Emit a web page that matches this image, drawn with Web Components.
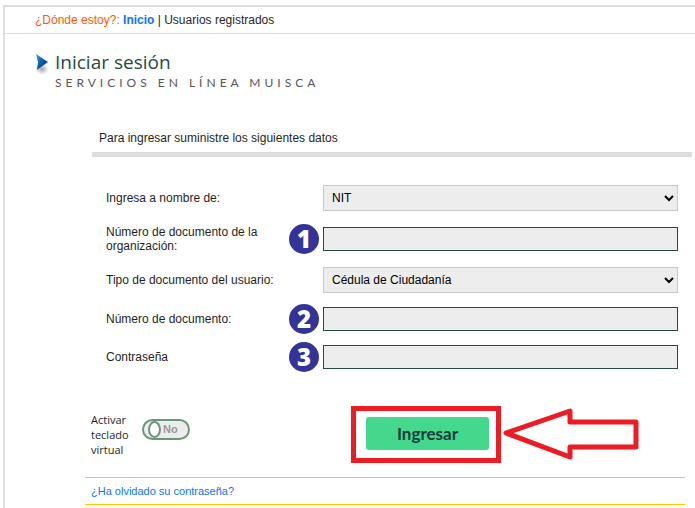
<!DOCTYPE html>
<html lang="es">
<head>
<meta charset="utf-8">
<title>Iniciar sesión</title>
<style>
    body{
        margin: 0;
        background: #fff;
        color: #1f1f1f;
        font: 12px/14px "Liberation Sans", Arial, sans-serif;
    }
</style>
</head>
<body>
<login-page></login-page>

<script>
class RutaPagina extends HTMLElement {
    constructor() {
        super();
        this.attachShadow({ mode: "open" });
        this.shadowRoot.innerHTML = /*html*/`
            <style>
                :host{
                    display: block;
                    padding: 6px 30px;
                    border-bottom: 1px solid #ddd;
                }
                span{ color: #ff5a00; }
                a{
                    color: #0a74ff;
                    font-weight: bold;
                    text-decoration: none;
                }
            </style>
            <span>¿Dónde estoy?:</span> <a href="#inicio">Inicio</a> | <slot></slot>
        `;
    }
}
customElements.define('ruta-pagina', RutaPagina);

class TituloPagina extends HTMLElement {
    constructor() {
        super();
        this.attachShadow({ mode: "open" });
        this.shadowRoot.innerHTML = /*html*/`
            <style>
                :host{
                    display: flex;
                    gap: 4px;
                    padding: 16px 30px 0;
                    font-family: "Open Sans", sans-serif;
                }
                svg{
                    flex: none;
                    margin-top: 2px;
                }
                h1{
                    margin: 0;
                    font-size: 19px;
                    line-height: 24px;
                    font-weight: 400;
                    color: #234b40;
                }
                p{
                    margin: 0;
                    font-family: Lato, sans-serif;
                    font-size: 12px;
                    line-height: 18px;
                    letter-spacing: 4px;
                    color: #555;
                }
            </style>
            <svg width="16" height="24" viewBox="0 0 16 24">
                <defs>
                    <linearGradient id="azul" x1="0" y1="0" x2="1" y2="1">
                        <stop offset="0" stop-color="#4ba0dc"/>
                        <stop offset=".5" stop-color="#0759a8"/>
                        <stop offset="1" stop-color="#063c82"/>
                    </linearGradient>
                    <radialGradient id="sombra">
                        <stop offset="0" stop-color="#777" stop-opacity=".7"/>
                        <stop offset="1" stop-color="#999" stop-opacity="0"/>
                    </radialGradient>
                </defs>
                <ellipse cx="7" cy="17" rx="7" ry="6" fill="url(#sombra)"/>
                <path d="M1 2 L13 10 L2 18 L3 10 Z" fill="url(#azul)"/>
            </svg>
            <div>
                <h1><slot></slot></h1>
                <p><slot name="subtitulo"></slot></p>
            </div>
        `;
    }
}
customElements.define('titulo-pagina', TituloPagina);

class CampoFormulario extends HTMLElement {
    constructor() {
        super();
        this.attachShadow({ mode: "open" });
        const tipo = this.getAttribute('tipo');
        const paso = this.getAttribute('paso');
        const valor = this.getAttribute('valor');
        const control = tipo === 'select'
            ? `<select id="control"><option>${valor}</option></select>`
            : `<input id="control" type="${tipo}">`;
        this.shadowRoot.innerHTML = /*html*/`
            <style>
                :host{
                    display: grid;
                    grid-template-columns: 179px 30px 1fr;
                    column-gap: 4px;
                    align-items: center;
                }
                .paso{
                    width: 30px;
                    height: 30px;
                    margin: -3px 0;
                    border-radius: 50%;
                    background: #333399;
                    color: #fff;
                    font: 800 24px/30px "Open Sans", sans-serif;
                    text-align: center;
                }
                select, input{
                    grid-column: 3;
                    box-sizing: border-box;
                    width: 100%;
                    height: 24px;
                    margin: 0;
                    padding: 0 4px;
                    border: 1px solid #234b40;
                    border-radius: 0;
                    background-color: #ededed;
                    color: #000;
                    font: inherit;
                }
                select{
                    height: 26px;
                    border-color: #c8c8c8;
                }
            </style>
            <label for="control"><slot></slot></label>
            ${paso ? `<span class="paso">${paso}</span>` : ''}
            ${control}
        `;
    }
}
customElements.define('campo-formulario', CampoFormulario);

class TecladoVirtual extends HTMLElement {
    constructor() {
        super();
        this.attachShadow({ mode: "open" });
        this.shadowRoot.innerHTML = /*html*/`
            <style>
                :host{ display: block; }
                label{
                    display: flex;
                    align-items: center;
                    gap: 10px;
                    font: 11px/15px "Open Sans", sans-serif;
                }
                .texto{ width: 41px; }
                .switch{
                    box-sizing: border-box;
                    display: flex;
                    align-items: center;
                    width: 48px;
                    height: 21px;
                    margin-bottom: 10px;
                    padding-left: 4px;
                    border: 2px solid #6d9679;
                    border-radius: 11px;
                    background: #ededed;
                    color: #999;
                    font: bold 11px/17px "Liberation Sans", Arial, sans-serif;
                }
                input{
                    appearance: none;
                    box-sizing: border-box;
                    width: 13px;
                    height: 17px;
                    margin: 0 2px 0 0;
                    border: 2px solid #6d9679;
                    border-radius: 50%;
                    background: #fff;
                }
            </style>
            <label>
                <span class="texto"><slot></slot></span>
                <span class="switch"><input type="checkbox">No</span>
            </label>
        `;
    }
}
customElements.define('teclado-virtual', TecladoVirtual);

class BotonIngresar extends HTMLElement {
    constructor() {
        super();
        this.attachShadow({ mode: "open" });
        this.shadowRoot.innerHTML = /*html*/`
            <style>
                :host{
                    display: flex;
                    align-items: flex-start;
                    gap: 2px;
                }
                .marco{
                    padding: 6px 7px 8px 10px;
                    border: 5px solid #ed1c24;
                }
                button{
                    display: block;
                    width: 123px;
                    height: 33px;
                    padding: 0;
                    border: 0;
                    border-radius: 3px;
                    background: #43d88c;
                    color: #123c3c;
                    font: 700 17px/33px Lato, sans-serif;
                }
                svg{ display: block; margin-top: 1px; }
            </style>
            <div class="marco"><button type="submit"><slot></slot></button></div>
            <svg width="137" height="53" viewBox="0 0 137 53">
                <path d="M3 26 L67 4 V15 H133 V40 H67 V50 Z" fill="#fff" stroke="#ed1c24" stroke-width="5" stroke-linejoin="round"/>
            </svg>
        `;
    }
}
customElements.define('boton-ingresar', BotonIngresar);

class LoginPage extends HTMLElement {
    constructor() {
        super();
        this.attachShadow({ mode: "open" });
        this.shadowRoot.innerHTML = /*html*/`
            <style>
                :host{
                    display: block;
                    box-sizing: border-box;
                    min-height: calc(100vh - 5px);
                    margin: 5px 0 0 3px;
                    border: 2px solid #ddd;
                    border-width: 2px 0 0 2px;
                }
                .intro{
                    margin: 39px 3px 0 87px;
                    padding: 0 7px 7px;
                    border-bottom: 5px solid #ddd;
                }
                .campos{
                    display: grid;
                    row-gap: 14px;
                    padding: 28px 17px 0 101px;
                }
                .acciones{
                    display: flex;
                    align-items: flex-start;
                    gap: 161px;
                    padding: 37px 0 14px 86px;
                }
                teclado-virtual{ margin-top: 6px; }
                .olvido{
                    margin: 0 10px 3px 80px;
                    padding: 6px;
                    border: 1px solid #ffcc00;
                    border-width: 1px 0;
                    font-size: 11px;
                }
                .olvido a{
                    color: #0a74ff;
                    text-decoration: none;
                }
            </style>
            <ruta-pagina>Usuarios registrados</ruta-pagina>
            <titulo-pagina>Iniciar sesión<span slot="subtitulo">SERVICIOS EN LÍNEA MUISCA</span></titulo-pagina>
            <form>
                <p class="intro">Para ingresar suministre los siguientes datos</p>
                <div class="campos">
                    <campo-formulario tipo="select" valor="NIT">Ingresa a nombre de:</campo-formulario>
                    <campo-formulario tipo="text" paso="1">Número de documento de la organización:</campo-formulario>
                    <campo-formulario tipo="select" valor="Cédula de Ciudadanía">Tipo de documento del usuario:</campo-formulario>
                    <campo-formulario tipo="text" paso="2">Número de documento:</campo-formulario>
                    <campo-formulario tipo="password" paso="3">Contraseña</campo-formulario>
                </div>
                <div class="acciones">
                    <teclado-virtual>Activar teclado virtual</teclado-virtual>
                    <boton-ingresar>Ingresar</boton-ingresar>
                </div>
            </form>
            <div class="olvido"><a href="#recuperar">¿Ha olvidado su contraseña?</a></div>
        `;
    }
}
customElements.define('login-page', LoginPage);
</script>
</body>
</html>
